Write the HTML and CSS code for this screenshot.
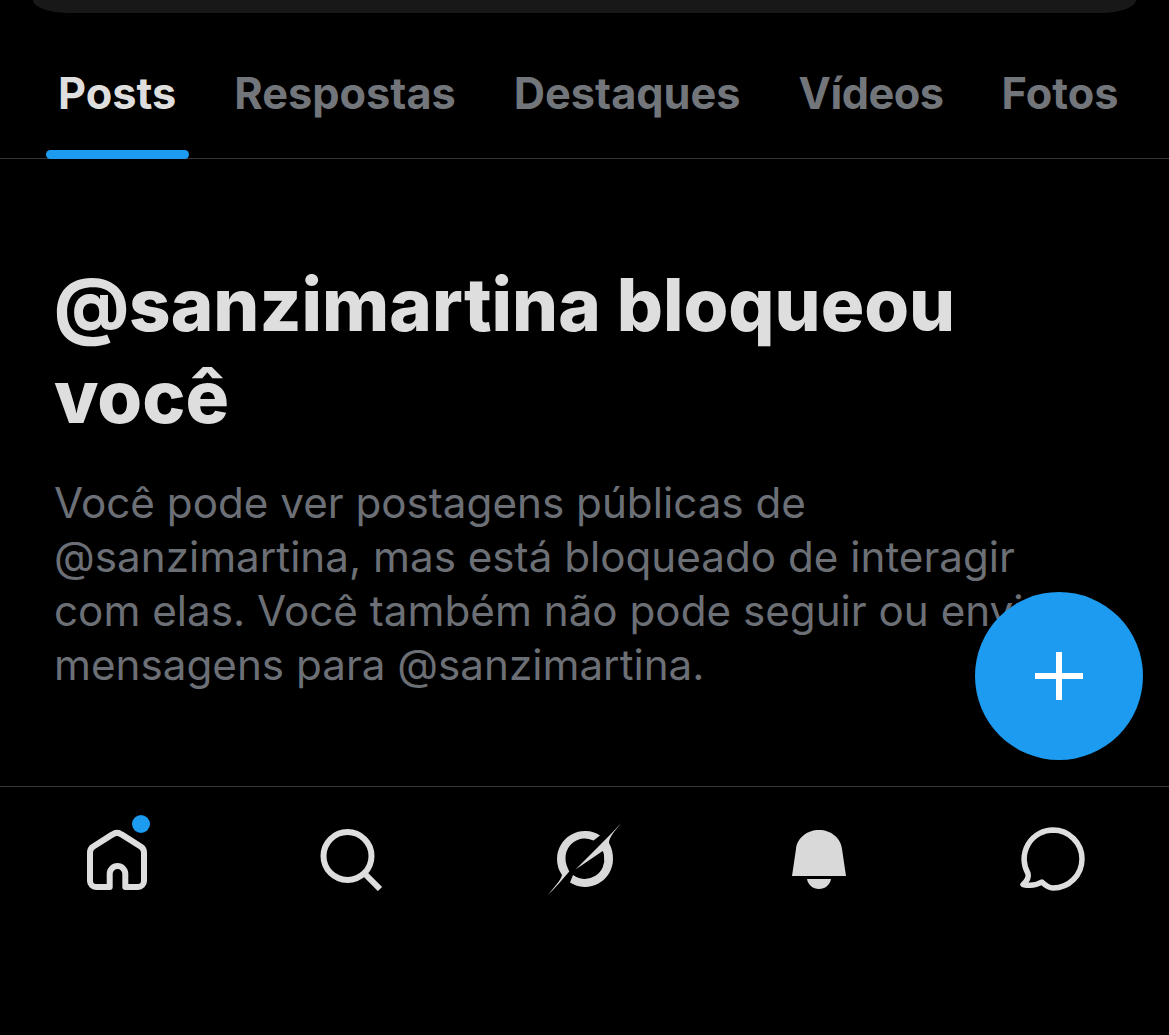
FILE: index.html
```html
<!DOCTYPE html>
<html lang="pt-BR">
<head>
  <meta charset="UTF-8">
  <meta name="viewport" content="width=device-width, initial-scale=1.0">
  <title>Perfil bloqueado</title>
  <link rel="stylesheet" href="styles.css">
</head>
<body>
  <div class="top-pill"></div>

  <nav class="tabs">
    <a class="tab active"><span class="tab-label">Posts</span></a>
    <a class="tab"><span class="tab-label">Respostas</span></a>
    <a class="tab"><span class="tab-label">Destaques</span></a>
    <a class="tab tab-tight"><span class="tab-label">Vídeos</span></a>
    <a class="tab"><span class="tab-label">Fotos</span></a>
  </nav>

  <main class="blocked">
    <h1>@sanzimartina bloqueou você</h1>
    <p>Você pode ver postagens públicas de @sanzimartina, mas está bloqueado de interagir com elas. Você também não pode seguir ou enviar mensagens para @sanzimartina.</p>
  </main>

  <button class="fab" type="button" aria-label="Novo post">
    <svg viewBox="0 0 48 48" width="48" height="48"><path d="M24 0v48M0 24h48" fill="none" stroke="#fff" stroke-width="6"/></svg>
  </button>

  <footer class="bottom-nav">
    <a class="nav-item home">
      <svg viewBox="0 0 64 64" width="64" height="64"><path d="M24.700 60V46.800a7.800 7.800 0 0 1 15.600 0V60H53a6 6 0 0 0 6-6V25.500a7 7 0 0 0-3-5.700L36.500 7.400a8 8 0 0 0-9 0L8 19.800a7 7 0 0 0-3 5.700V54a6 6 0 0 0 6 6z" fill="none" stroke="#dedede" stroke-width="6" stroke-linejoin="round"/></svg>
      <span class="dot"></span>
    </a>
    <a class="nav-item">
      <svg viewBox="0 0 64 64" width="64" height="64"><circle cx="28.500" cy="29" r="24" fill="none" stroke="#dedede" stroke-width="6"/><path d="M46 47l15 15" fill="none" stroke="#dedede" stroke-width="6"/></svg>
    </a>
    <a class="nav-item">
      <svg viewBox="0 0 76 72" width="76" height="72"><path d="M74 0C68 8 62 14 62 20Q66 27 66 36A28 28 0 0 1 23 59.600L26 52A19.500 19.500 0 0 0 57 33C57 31 56.500 29.500 55.700 28L28.500 46.500L50 25C58 17 67 8 74 0z" fill="#d9d9d9"/><path d="M1 72C8 63 14 57 15 52Q10 45 10 36A28 28 0 0 1 53 12.400L46.500 17.500A19.500 19.500 0 0 0 18.500 36Q18.500 41 22.300 48.500C16 56 8 65 1 72z" fill="#d9d9d9"/></svg>
    </a>
    <a class="nav-item">
      <svg viewBox="0 0 56 60" width="56" height="60"><path d="M1 47L5 20C6 9 16 1 28 1s22 8 23 19l4 27zM16 50h24c-1 6-6 10-12 10s-11-4-12-10z" fill="#d9d9d9"/></svg>
    </a>
    <a class="nav-item">
      <svg viewBox="0 0 68 64" width="68" height="64"><path d="M34 3A29 29 0 0 0 9 46.500C10 50 8 54 4 57.500C11 59 18 58 22.800 55C26 58 30 61 34 61A29 29 0 0 0 34 3z" fill="none" stroke="#dedede" stroke-width="5.500" stroke-linejoin="round"/></svg>
    </a>
  </footer>
</body>
</html>
```

FILE: styles.css
```css
* {
  box-sizing: border-box;
}
body {
  font-family: 'Inter', 'Liberation Sans', sans-serif;
  background-color: #000;
  color: #dedede;
  margin: 0;
  height: 1035px;
  overflow: hidden;
  position: relative;
}
.top-pill {
  height: 13px;
  margin: 0 33px;
  background-color: #181818;
  border-radius: 0 0 36px 36px / 0 0 13px 13px;
}
.tabs {
  display: flex;
  gap: 32px;
  height: 146px;
  padding-left: 46px;
  border-bottom: 1px solid #333639;
}
.tab {
  display: flex;
  flex-direction: column;
  justify-content: space-between;
  padding: 53px 13px 0;
  margin-bottom: -1px;
  color: #72767b;
  font-size: 43.3px;
  line-height: 54px;
  font-weight: 700;
  white-space: nowrap;
}
.tab-tight {
  letter-spacing: -0.5px;
}
.tab.active {
  padding: 53px 13px 0 12px;
  color: #dedede;
}
.tab.active::after {
  content: "";
  height: 9px;
  margin: 0 -13px 0 -12px;
  background-color: #1d9bf0;
  border-radius: 5px;
}
.blocked {
  height: 628px;
  padding: 100px 100px 0 54px;
  border-bottom: 1px solid #333639;
}
.blocked h1 {
  margin: 0 0 33px;
  font-size: 72.5px;
  line-height: 92px;
  font-weight: 800;
  color: #dedede;
}
.blocked p {
  margin: 0;
  font-size: 42.2px;
  line-height: 54px;
  color: #6c7076;
}
.fab {
  position: absolute;
  left: 975px;
  top: 592px;
  width: 168px;
  height: 168px;
  border: none;
  border-radius: 50%;
  background-color: #1d9bf0;
  display: flex;
  align-items: center;
  justify-content: center;
  padding: 0;
}
.bottom-nav {
  display: grid;
  grid-template-columns: repeat(5, 234px);
  padding-top: 38px;
}
.nav-item {
  position: relative;
  display: flex;
  justify-content: center;
  align-items: center;
  height: 68px;
}
.dot {
  position: absolute;
  left: 132px;
  top: -10px;
  width: 18px;
  height: 18px;
  border-radius: 50%;
  background-color: #1d9bf0;
}
```
